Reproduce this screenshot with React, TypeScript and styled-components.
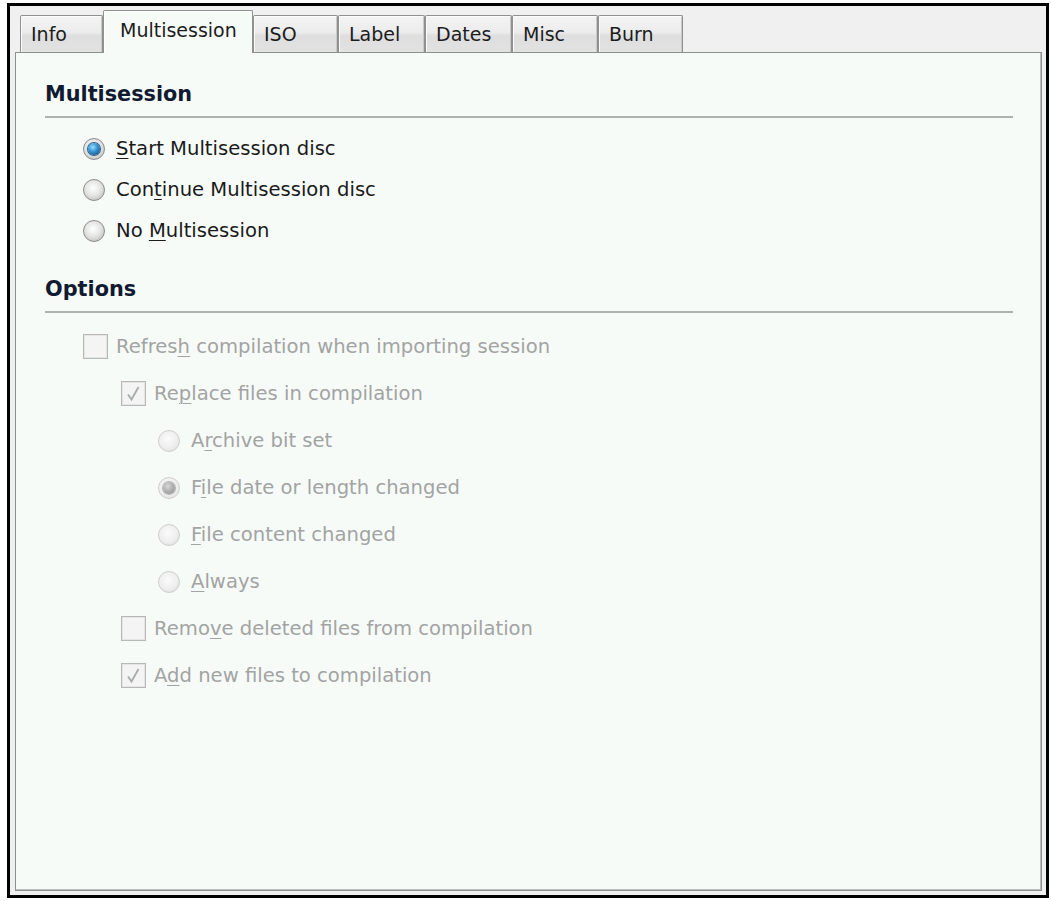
import React from "react";
import styled, { createGlobalStyle, css } from "styled-components";

const GlobalStyle = createGlobalStyle`
  html, body {
    margin: 0;
    padding: 0;
    background: #ffffff;
  }
  body {
    font-family: "DejaVu Sans", "Liberation Sans", sans-serif;
    color: #1a1a1a;
  }
`;

const Frame = styled.div`
  box-sizing: border-box;
  width: 1042px;
  height: 895px;
  margin: 3px 2px 3px 7px;
  border: 3px solid #000000;
  background: #f0f0f0;
  padding: 4px 4px 4px 5px;
  display: flex;
  flex-direction: column;
`;

const TabStrip = styled.div`
  display: flex;
  align-items: flex-end;
  height: 43px;
  padding-left: 5px;
  position: relative;
  z-index: 2;
`;

const Tab = styled.div<{ $width: number; $selected?: boolean }>`
  box-sizing: border-box;
  width: ${(p) => p.$width}px;
  display: flex;
  align-items: center;
  padding-left: 10px;
  font-size: 19px;
  color: #1c1c1c;
  border: 1px solid #8f9190;
  border-bottom: none;
  border-radius: 2px 2px 0 0;
  ${(p) =>
    p.$selected
      ? css`
          height: 43px;
          padding-left: 16px;
          padding-bottom: 4px;
          background: #f7fbf8;
          box-shadow: inset 1px 1px 0 #ffffff;
        `
      : css`
          height: 37px;
          margin-bottom: 1px;
          background: linear-gradient(#f4f4f4 0%, #ececec 45%, #dedede 55%, #e2e2e2 100%);
          box-shadow: inset 1px 1px 0 #fbfbfb, inset -1px 0 0 #c9c9c9;
        `}
`;

const Panel = styled.div`
  flex: 1;
  margin-top: -1px;
  border: 1px solid #8a918e;
  box-shadow: inset -1px -1px 0 #b9bdbb;
  background: #f7fbf8;
  padding: 29px 28px 0 29px;
  position: relative;
  z-index: 1;
`;

const SectionTitle = styled.div<{ $first?: boolean }>`
  font-size: 20.8px;
  font-weight: bold;
  line-height: 24px;
  color: #101a30;
  margin-top: ${(p) => (p.$first ? 0 : 26)}px;
`;

const Rule = styled.div`
  height: 2px;
  margin-top: 10px;
  background: #aeb2af;
`;

const OptionList = styled.div`
  padding-top: 10px;
  display: flex;
  flex-direction: column;
`;

const Row = styled.label<{ $level: number; $height: number; $disabled?: boolean }>`
  display: flex;
  align-items: center;
  height: ${(p) => p.$height}px;
  padding-left: ${(p) => [0, 38, 76, 113][p.$level]}px;
  font-size: 19.6px;
  color: ${(p) => (p.$disabled ? "#a2a4a3" : "#1a1a1a")};
  gap: 8px;
`;

const ControlBox = styled.span`
  width: 25px;
  height: 25px;
  display: flex;
  align-items: center;
  justify-content: flex-start;
  flex: none;
`;

const Radio = styled.span<{ $checked?: boolean; $disabled?: boolean }>`
  box-sizing: border-box;
  width: 22px;
  height: 22px;
  border-radius: 50%;
  position: relative;
  display: block;
  border: 1px solid ${(p) => (p.$disabled ? "#cdcfce" : "#8c8e8d")};
  background: ${(p) =>
    p.$disabled
      ? "radial-gradient(circle at 45% 40%, #fbfbfb 0%, #eeeeee 55%, #e2e2e2 80%, #f2f2f2 100%)"
      : "radial-gradient(circle at 45% 40%, #ffffff 0%, #e2e2e2 50%, #c4c4c4 78%, #e6e6e6 100%)"};
  ${(p) =>
    p.$checked &&
    css`
      &::after {
        content: "";
        position: absolute;
        left: 4px;
        top: 4px;
        width: 12px;
        height: 12px;
        border-radius: 50%;
        background: ${p.$disabled
          ? "radial-gradient(circle at 40% 35%, #d8d8d8 0%, #a9a9a9 55%, #8d8d8d 100%)"
          : "radial-gradient(circle at 40% 35%, #9be0ff 0%, #3c9ad6 40%, #0f4f8f 85%, #0b3e73 100%)"};
        box-shadow: 0 0 0 1px ${p.$disabled ? "#b5b5b5" : "#2a5f8f"};
      }
    `}
`;

const Check = styled.span`
  box-sizing: border-box;
  width: 25px;
  height: 25px;
  display: flex;
  align-items: center;
  justify-content: center;
  border: 1px solid #b6b8b7;
  background: #f3f4f3;
  box-shadow: inset 0 0 0 1px #e4e5e4;
`;

const Key = styled.span`
  text-decoration: underline;
  text-underline-offset: 3px;
  text-decoration-thickness: 1px;
`;

type Item = {
  kind: "radio" | "check";
  level: number;
  checked?: boolean;
  pre: string;
  key: string;
  post: string;
};

const topItems: Item[] = [
  { kind: "radio", level: 1, checked: true, pre: "", key: "S", post: "tart Multisession disc" },
  { kind: "radio", level: 1, pre: "Con", key: "t", post: "inue Multisession disc" },
  { kind: "radio", level: 1, pre: "No ", key: "M", post: "ultisession" },
];

const optionItems: Item[] = [
  { kind: "check", level: 1, pre: "Refres", key: "h", post: " compilation when importing session" },
  { kind: "check", level: 2, checked: true, pre: "Re", key: "p", post: "lace files in compilation" },
  { kind: "radio", level: 3, pre: "A", key: "r", post: "chive bit set" },
  { kind: "radio", level: 3, checked: true, pre: "F", key: "i", post: "le date or length changed" },
  { kind: "radio", level: 3, pre: "", key: "F", post: "ile content changed" },
  { kind: "radio", level: 3, pre: "", key: "A", post: "lways" },
  { kind: "check", level: 2, pre: "Remo", key: "v", post: "e deleted files from compilation" },
  { kind: "check", level: 2, checked: true, pre: "A", key: "d", post: "d new files to compilation" },
];

const CheckMark = () => (
  <svg width="17" height="17" viewBox="0 0 17 17">
    <path d="M3 9.5 L6.5 14.5 L13.5 2" fill="none" stroke="#a9abaa" strokeWidth="1.8" />
  </svg>
);

const OptionRow = ({ item, height, disabled }: { item: Item; height: number; disabled?: boolean }) => (
  <Row $level={item.level} $height={height} $disabled={disabled}>
    <ControlBox>
      {item.kind === "radio" ? (
        <Radio $checked={item.checked} $disabled={disabled} />
      ) : (
        <Check>{item.checked && <CheckMark />}</Check>
      )}
    </ControlBox>
    <span>
      {item.pre}
      <Key>{item.key}</Key>
      {item.post}
    </span>
  </Row>
);

const tabs = [
  { label: "Info", width: 83 },
  { label: "Multisession", width: 150, selected: true },
  { label: "ISO", width: 85 },
  { label: "Label", width: 87 },
  { label: "Dates", width: 87 },
  { label: "Misc", width: 86 },
  { label: "Burn", width: 85 },
];

export default function App() {
  return (
    <>
      <GlobalStyle />
      <Frame>
        <TabStrip>
          {tabs.map((t) => (
            <Tab key={t.label} $width={t.width} $selected={t.selected}>
              {t.label}
            </Tab>
          ))}
        </TabStrip>
        <Panel>
          <SectionTitle $first>Multisession</SectionTitle>
          <Rule />
          <OptionList>
            {topItems.map((it, i) => (
              <OptionRow key={i} item={it} height={41} />
            ))}
          </OptionList>
          <SectionTitle>Options</SectionTitle>
          <Rule />
          <OptionList>
            {optionItems.map((it, i) => (
              <OptionRow key={i} item={it} height={47} disabled />
            ))}
          </OptionList>
        </Panel>
      </Frame>
    </>
  );
}
